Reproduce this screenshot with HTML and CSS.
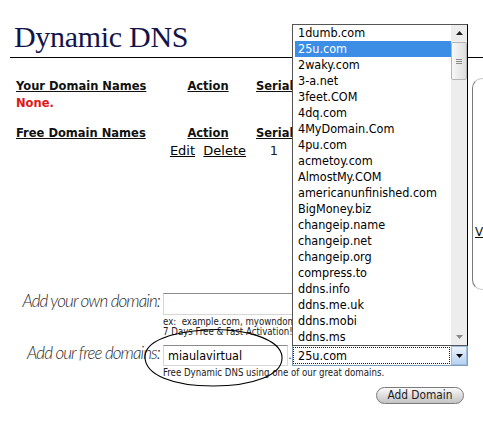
FILE: index.html
```html
<!DOCTYPE html>
<html>
<head>
<meta charset="utf-8">
<title>Dynamic DNS</title>
<link rel="stylesheet" href="styles.css">
</head>
<body>
<div class="page">
  <header class="head">
    <h1 class="title">Dynamic DNS</h1>
  </header>
  <div class="body">
    <main class="main">
      <div class="dtable first">
        <div class="th">Your Domain Names</div>
        <div class="th act">Action</div>
        <div class="th ser">Serial</div>
        <div class="none">None.</div>
      </div>
      <div class="dtable second">
        <div class="th">Free Domain Names</div>
        <div class="th act">Action</div>
        <div class="th ser">Serial</div>
        <div class="cell"></div>
        <div class="act links"><a href="#">Edit</a>&nbsp;&nbsp;<a href="#">Delete</a></div>
        <div class="ser num">1</div>
      </div>
      <form class="addform">
        <label class="lbl">Add your own domain:</label>
        <div class="field clip">
          <input class="txt own" type="text">
          <p class="hint">ex:&nbsp; example.com, myowndomain.com<br>7 Days Free &amp; Fast Activation!</p>
        </div>
        <label class="lbl">Add our free domains:</label>
        <div class="field">
          <div class="inline">
            <input class="txt free" type="text" value="miaulavirtual">
            <span class="dot">.</span>
            <div class="select">
              <span class="sel-text">25u.com</span>
              <span class="sel-btn"><svg width="7" height="4" viewBox="0 0 7 4"><path d="M0 0h7L3.5 4z" fill="#000"/></svg></span>
            </div>
          </div>
          <p class="hint">Free Dynamic DNS using one of our great domains.</p>
        </div>
        <div class="cell"></div>
        <div class="btnrow"><button class="btn" type="button">Add Domain</button></div>
      </form>
    </main>
    <aside class="side"><a href="#" class="side-link">V</a></aside>
  </div>

  <div class="droplist">
    <ul class="opts">
      <li>1dumb.com</li>
      <li class="sel">25u.com</li>
      <li>2waky.com</li>
      <li>3-a.net</li>
      <li>3feet.COM</li>
      <li>4dq.com</li>
      <li>4MyDomain.Com</li>
      <li>4pu.com</li>
      <li>acmetoy.com</li>
      <li>AlmostMy.COM</li>
      <li>americanunfinished.com</li>
      <li>BigMoney.biz</li>
      <li>changeip.name</li>
      <li>changeip.net</li>
      <li>changeip.org</li>
      <li>compress.to</li>
      <li>ddns.info</li>
      <li>ddns.me.uk</li>
      <li>ddns.mobi</li>
      <li>ddns.ms</li>
    </ul>
    <div class="sbar">
      <div class="sb-btn"><svg width="7" height="4" viewBox="0 0 7 4"><path d="M0 4h7L3.5 0z" fill="#222"/></svg></div>
      <div class="sb-thumb"><span></span><span></span><span></span></div>
      <div class="sb-track"></div>
      <div class="sb-btn"><svg width="7" height="4" viewBox="0 0 7 4"><path d="M0 0h7L3.5 4z" fill="#888"/></svg></div>
    </div>
  </div>

  <svg class="circle" width="142" height="62" viewBox="0 0 142 62">
    <path d="M60 3 C100 0 138 12 139 30 C140 48 110 59 70 59 C30 59 2 48 2 30 C2 14 28 5 64 3" fill="none" stroke="#000" stroke-width="1.1"/>
  </svg>
</div>
</body>
</html>
```
FILE: styles.css
```css
html, body {
  margin: 0;
  padding: 0;
  background: #fff;
}
body {
  font-family: "DejaVu Sans", Verdana, sans-serif;
  color: #000;
  overflow: hidden;
}
.page {
  position: relative;
  width: 483px;
  height: 434px;
  overflow: hidden;
}
.head {
  margin-left: 10px;
  padding-top: 20px;
  padding-bottom: 3px;
  border-bottom: 1px solid #000;
}
.title {
  margin: 0;
  padding-left: 4px;
  font-family: "Liberation Serif", "Times New Roman", serif;
  font-weight: normal;
  font-size: 30px;
  line-height: 34px;
  letter-spacing: -0.3px;
  color: #14144a;
}
.body {
  display: flex;
}
.main {
  width: 472px;
  flex: none;
}
.dtable {
  display: grid;
  grid-template-columns: 144px 96px 36px;
  padding-left: 16px;
  row-gap: 3px;
}
.first { margin-top: 21px; }
.second { margin-top: 16px; }
.th {
  font-size: 11.5px;
  font-weight: bold;
  line-height: 14px;
  text-decoration: underline;
  white-space: nowrap;
  color: #111;
}
.act, .ser { text-align: center; }
.none {
  grid-column: 1 / 4;
  font-size: 11.5px;
  font-weight: bold;
  line-height: 14px;
  color: #e01515;
}
.links, .num {
  font-size: 13px;
  line-height: 16px;
  white-space: nowrap;
}
.links a {
  color: #000;
  text-decoration: underline;
}
.num { color: #222; }

.addform {
  margin-top: 132px;
  display: grid;
  grid-template-columns: 163px 1fr;
  row-gap: 6px;
}
.lbl {
  text-align: right;
  padding-right: 3px;
  font-family: Lato, "Open Sans", sans-serif;
  font-style: italic;
  font-weight: 300;
  font-size: 17px;
  letter-spacing: -0.9px;
  line-height: 20px;
  color: #2a2a2a;
  white-space: nowrap;
}
.field { padding-top: 2px; }
.clip {
  width: 129px;
  overflow: hidden;
}
.txt {
  display: block;
  box-sizing: border-box;
  margin: 0;
  padding: 0 0 0 4px;
  border: 1px solid #d6d6d6;
  border-top-color: #8a8a8a;
  font-family: "DejaVu Sans Condensed", "DejaVu Sans", sans-serif;
  font-stretch: condensed;
  font-size: 12.5px;
  color: #000;
  background: #fff;
  outline: none;
}
.own { width: 150px; height: 22px; }
.free { width: 125px; height: 21px; }
.hint {
  margin: 2px 0 0;
  font-family: "DejaVu Sans Condensed", "DejaVu Sans", sans-serif;
  font-stretch: condensed;
  font-size: 9.6px;
  line-height: 10px;
  color: #222;
  white-space: nowrap;
}
.inline {
  display: flex;
  align-items: flex-start;
}
.dot {
  width: 4px;
  font-size: 11px;
  line-height: 21px;
  text-align: center;
  color: #333;
}
.select {
  box-sizing: border-box;
  width: 176px;
  height: 21px;
  display: flex;
  border: 1px solid #7f9db9;
  background: #fff;
}
.sel-text {
  flex: 1;
  margin: 1px 1px 1px 0;
  border: 1px dotted #222;
  padding-left: 4px;
  font-family: "DejaVu Sans Condensed", "DejaVu Sans", sans-serif;
  font-stretch: condensed;
  font-size: 12.5px;
  line-height: 15px;
}
.sel-btn {
  width: 16px;
  display: flex;
  align-items: center;
  justify-content: center;
  background: linear-gradient(#e9f2fc, #b8d2f0);
  border: 1px solid #9dbde5;
  box-sizing: border-box;
}
.btnrow { padding-top: 3px; }
.btn {
  display: block;
  margin: 0 0 0 213px;
  width: 88px;
  height: 17px;
  padding: 0;
  border: 1px solid #7a7a7a;
  border-radius: 9px;
  background: linear-gradient(#fafafa, #d8d8d8 60%, #c4c4c4);
  font-family: "DejaVu Sans Condensed", "DejaVu Sans", sans-serif;
  font-stretch: condensed;
  font-size: 11.8px;
  line-height: 15px;
  color: #222;
}

.side {
  flex: 1;
  box-sizing: border-box;
  margin-top: 20px;
  height: 212px;
  border: 1px solid #c8c8c8;
  border-left-color: #777;
  border-right: none;
  border-radius: 10px 0 0 10px;
  padding-top: 142px;
  padding-left: 2px;
  overflow: hidden;
}
.side-link {
  font-size: 12px;
  color: #111;
  text-decoration: underline;
}

.droplist {
  position: absolute;
  left: 292px;
  top: 24px;
  width: 176px;
  height: 322px;
  box-sizing: border-box;
  border: 1px solid #555;
  border-right-color: #000;
  background: #fff;
  overflow: hidden;
}
.opts {
  list-style: none;
  margin: 0;
  padding: 0 0 0 2px;
  width: 158px;
  box-sizing: border-box;
  font-family: "DejaVu Sans Condensed", "DejaVu Sans", sans-serif;
  font-stretch: condensed;
  font-size: 12.5px;
}
.opts li {
  height: 16px;
  line-height: 16px;
  padding-left: 3px;
  white-space: nowrap;
  color: #000;
}
.opts li.sel {
  background: #3b8de6;
  color: #fff;
}
.sbar {
  position: absolute;
  top: 0;
  right: 0;
  bottom: 0;
  width: 16px;
  display: flex;
  flex-direction: column;
  background: #ededed;
}
.sb-btn {
  height: 16px;
  display: flex;
  align-items: center;
  justify-content: center;
}
.sb-thumb {
  margin-top: 1px;
  height: 38px;
  box-sizing: border-box;
  border: 1px solid #b5b5b5;
  border-radius: 2px;
  background: linear-gradient(90deg, #f7f7f7, #dedede);
  display: flex;
  flex-direction: column;
  align-items: center;
  justify-content: center;
  gap: 1px;
}
.sb-thumb span {
  width: 6px;
  height: 1px;
  background: #8a8a8a;
}
.sb-track { flex: 1; }

.circle {
  position: absolute;
  left: 143px;
  top: 327px;
}
```
